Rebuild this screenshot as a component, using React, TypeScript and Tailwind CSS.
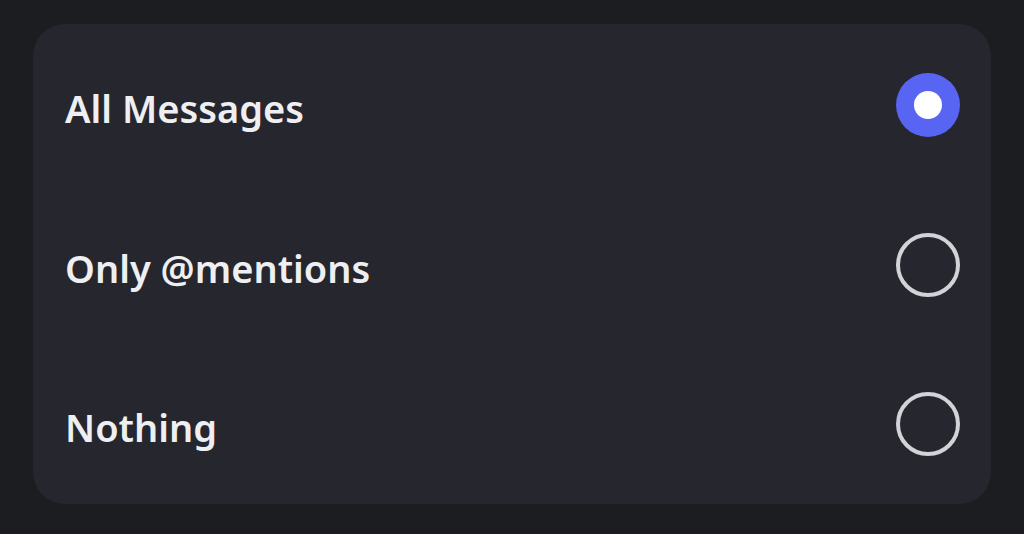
import React from "react";

const items = [
  { label: "All Messages", selected: true },
  { label: "Only @mentions", selected: false },
  { label: "Nothing", selected: false },
];

export default function App() {
  return (
    <div className="w-[1024px] h-[534px] bg-[#1c1d21] pt-[24px] pl-[33px] pr-[33px]">
      <div
        className="w-[958px] h-[480px] bg-[#25262e] rounded-[32px] flex flex-col pt-[1px]"
        style={{ fontFamily: '"Noto Sans", "Open Sans", sans-serif' }}
      >
        {items.map((it) => (
          <div key={it.label} className="h-[160.5px] flex items-center justify-between pl-[32px] pr-[31px]">
            <span className="text-[38px] leading-[48px] font-semibold text-[#eeeff2] pt-[6px]">{it.label}</span>
            {it.selected ? (
              <div className="w-[64px] h-[64px] rounded-full bg-[#5865f2] flex items-center justify-center">
                <div className="w-[28px] h-[28px] rounded-full bg-white" />
              </div>
            ) : (
              <div className="w-[64px] h-[64px] rounded-full border-[4px] border-[#d2d3d7]" />
            )}
          </div>
        ))}
      </div>
    </div>
  );
}
